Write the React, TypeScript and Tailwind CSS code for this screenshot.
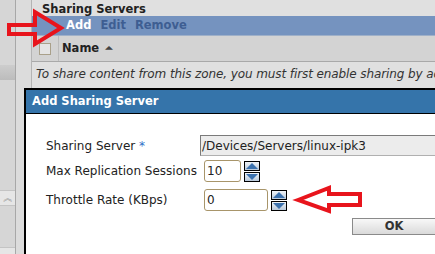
import React from "react";

function Spin({ up }: { up: boolean }) {
  return (
    <div className="w-[16px] h-[10px] border border-black bg-gradient-to-b from-[#f0f4f8] to-[#b9c9da] flex items-center justify-center">
      <svg width="12" height="6" viewBox="0 0 12 6">
        {up ? (
          <polygon points="0,6 6,0 12,6" fill="#3b71ad" />
        ) : (
          <polygon points="0,0 12,0 6,6" fill="#3b71ad" />
        )}
      </svg>
    </div>
  );
}

function Spinner() {
  return (
    <div className="flex flex-col gap-[1px] ml-[3px]">
      <Spin up />
      <Spin up={false} />
    </div>
  );
}

export default function App() {
  return (
    <div
      className="relative w-[435px] h-[254px] overflow-hidden bg-[#e0e0e0] text-[12px] text-[#222]"
      style={{ fontFamily: '"DejaVu Sans", sans-serif' }}
    >
      <div className="flex h-full">
        {/* left rail */}
        <div className="w-[16px] shrink-0 h-full bg-[#d6d6d6] border-r border-[#a8a8a8] flex flex-col">
          <div className="h-[65px]" />
          <div className="h-[15px] bg-gradient-to-b from-[#cdcdcd] to-[#bcbcbc]" />
          <div className="h-[110px]" />
          <div className="h-[16px] bg-[#e6e6e6] border-y border-[#c4c4c4] flex items-center justify-center text-[#999] text-[10px] leading-none">
            ︽
          </div>
          <div className="flex-1" />
          <div className="h-[7px] bg-[#e6e6e6] border-t border-[#c4c4c4]" />
        </div>
        <div className="w-[16px] shrink-0 h-full bg-[#dcdcdc] border-r border-[#b4b4b4]" />

        {/* main panel */}
        <div className="flex-1 min-w-0 overflow-hidden flex flex-col">
          <div className="h-[16px] pl-[10px] font-bold text-[11.5px] leading-[16px] pt-[1px]">Sharing Servers</div>
          <div className="h-[20px] bg-[#7593bf] flex items-center font-bold text-[11.5px] gap-[9px] pl-[34px] border-b border-[#9fb0c8]">
            <span className="text-white">Add</span>
            <span className="text-[#3e5e92]">Edit</span>
            <span className="text-[#3e5e92]">Remove</span>
          </div>
          <div className="h-[26px] bg-[#d3d3d3] flex items-stretch border-b border-[#a9a9a9]">
            <div className="w-[27px] shrink-0 flex items-center justify-center border-r border-[#bcbcbc]">
              <div className="w-[12px] h-[12px] border border-[#a9a08a] bg-[#e4e4e4]" />
            </div>
            <div className="flex items-center pl-[3px] font-bold text-[11.5px]">
              Name
              <span className="ml-[6px] text-[9px] text-[#444]">⏶</span>
            </div>
          </div>
          <div className="pl-[4px] pt-[3px] italic whitespace-nowrap text-[#333] tracking-[-0.1px]">
            To share content from this zone, you must first enable sharing by adding
          </div>
        </div>
      </div>

      {/* modal dialog */}
      <div className="absolute left-[24px] top-[88px] w-[430px] h-[180px] border-2 border-black bg-white">
        <div className="h-[24px] bg-[#3574aa] border-b border-black text-white font-bold text-[11.5px] flex items-center pl-[6px]">
          Add Sharing Server
        </div>
        <div className="pl-[20px] pt-[21px] flex flex-col">
          <div className="flex items-center h-[21px]">
            <div className="w-[154px] shrink-0">
              Sharing Server <span className="text-[#2f6fc8]">*</span>
            </div>
            <div className="flex-1 h-[21px] bg-[#ececec] border border-[#b0b0b0] border-t-[#7a7a7a] border-l-[#7a7a7a] pl-[1px] flex items-center">
              /Devices/Servers/linux-ipk3
            </div>
          </div>
          <div className="flex items-center h-[22px] mt-[4px]">
            <div className="w-[158px] shrink-0">Max Replication Sessions</div>
            <div className="w-[37px] h-[22px] border border-[#a8956a] rounded-[3px] pl-[2px] flex items-center">10</div>
            <Spinner />
          </div>
          <div className="flex items-center h-[22px] mt-[7px]">
            <div className="w-[158px] shrink-0">Throttle Rate (KBps)</div>
            <div className="w-[64px] h-[22px] border border-[#a8956a] rounded-[3px] pl-[2px] flex items-center">0</div>
            <Spinner />
          </div>
          <div className="flex mt-[7px] pl-[306px]">
            <div className="w-[84px] h-[17px] border border-[#8a8a8a] bg-gradient-to-b from-[#f8f8f8] to-[#dadada] flex items-center justify-center font-bold text-[11.5px] text-[#333]">
              OK
            </div>
          </div>
        </div>
      </div>

      {/* annotation arrows */}
      <svg className="absolute left-0 top-0" width="435" height="254" viewBox="0 0 435 254">
        <polygon
          points="9,25 35,25 35,12 61,28 35,44 35,34 9,34"
          fill="none"
          stroke="#e8141c"
          strokeWidth="4"
        />
        <polygon
          points="298,200 329,188 329,194 360,194 360,205 329,205 329,211"
          fill="none"
          stroke="#e8141c"
          strokeWidth="4"
        />
      </svg>
    </div>
  );
}
